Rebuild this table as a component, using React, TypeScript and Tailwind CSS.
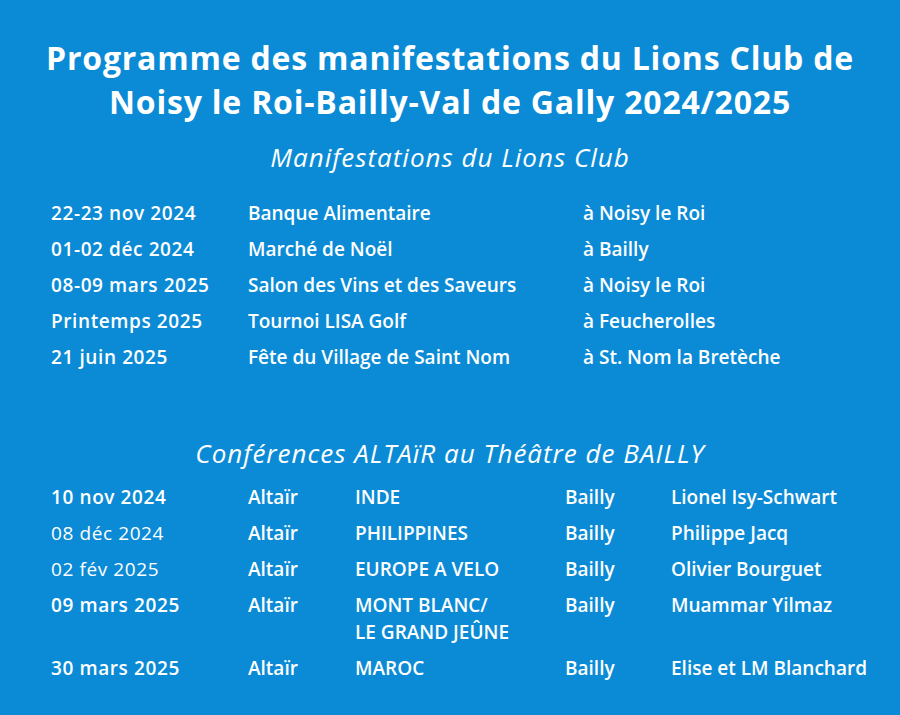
const events = [
  ['22-23 nov 2024', 'Banque Alimentaire', 'à Noisy le Roi'],
  ['01-02 déc 2024', 'Marché de Noël', 'à Bailly'],
  ['08-09 mars 2025', 'Salon des Vins et des Saveurs', 'à Noisy le Roi'],
  ['Printemps 2025', 'Tournoi LISA Golf', 'à Feucherolles'],
  ['21 juin 2025', 'Fête du Village de Saint Nom', 'à St. Nom la Bretèche'],
];

const talks = [
  { date: '10 nov 2024', topic: ['INDE'], who: 'Lionel Isy-Schwart', light: false },
  { date: '08 déc 2024', topic: ['PHILIPPINES'], who: 'Philippe Jacq', light: true },
  { date: '02 fév 2025', topic: ['EUROPE A VELO'], who: 'Olivier Bourguet', light: true },
  { date: '09 mars 2025', topic: ['MONT BLANC/', 'LE GRAND JEÛNE'], who: 'Muammar Yilmaz', light: false },
  { date: '30 mars 2025', topic: ['MAROC'], who: 'Elise et LM Blanchard', light: false },
];

const App = () => {
  return (
    <div
      className="min-h-[715px] w-[900px] bg-[#0b8bd6] text-white"
      style={{ fontFamily: '"Open Sans", Lato, sans-serif' }}
    >
      <div className="pt-[36px] text-center">
        <h1 className="text-[32px] font-bold leading-[44px] tracking-[0.8px]">
          Programme des manifestations du Lions Club de
          <br />
          Noisy le Roi-Bailly-Val de Gally 2024/2025
        </h1>
        <h2 className="mt-[17px] text-[26px] italic leading-[32px] tracking-[1px]">
          Manifestations du Lions Club
        </h2>
      </div>

      <div className="mt-[22px] pl-[51px] text-[19px] font-semibold">
        {events.map(([date, name, place]) => (
          <div key={date} className="grid h-[36px] grid-cols-[197px_335px_1fr] items-center">
            <span className="tracking-[0.6px]">{date}</span>
            <span>{name}</span>
            <span>{place}</span>
          </div>
        ))}
      </div>

      <h2 className="mt-[62px] text-center text-[26px] italic leading-[32px] tracking-[1px]">
        Conférences ALTAïR au Théâtre de BAILLY
      </h2>

      <div className="mt-[10px] pl-[51px] text-[19px] font-semibold">
        {talks.map((t) => (
          <div
            key={t.date}
            className="grid grid-cols-[197px_107px_210px_106px_1fr] items-start py-[6px] leading-[24px]"
          >
            <span className={t.light ? 'font-medium tracking-[0.6px]' : 'tracking-[0.6px]'}>
              {t.date}
            </span>
            <span>Altaïr</span>
            <span>
              {t.topic.map((l, i) => (
                <div key={l} className={i > 0 ? 'mt-[3px]' : ''}>
                  {l}
                </div>
              ))}
            </span>
            <span>Bailly</span>
            <span>{t.who}</span>
          </div>
        ))}
      </div>
    </div>
  );
};

export default App;
